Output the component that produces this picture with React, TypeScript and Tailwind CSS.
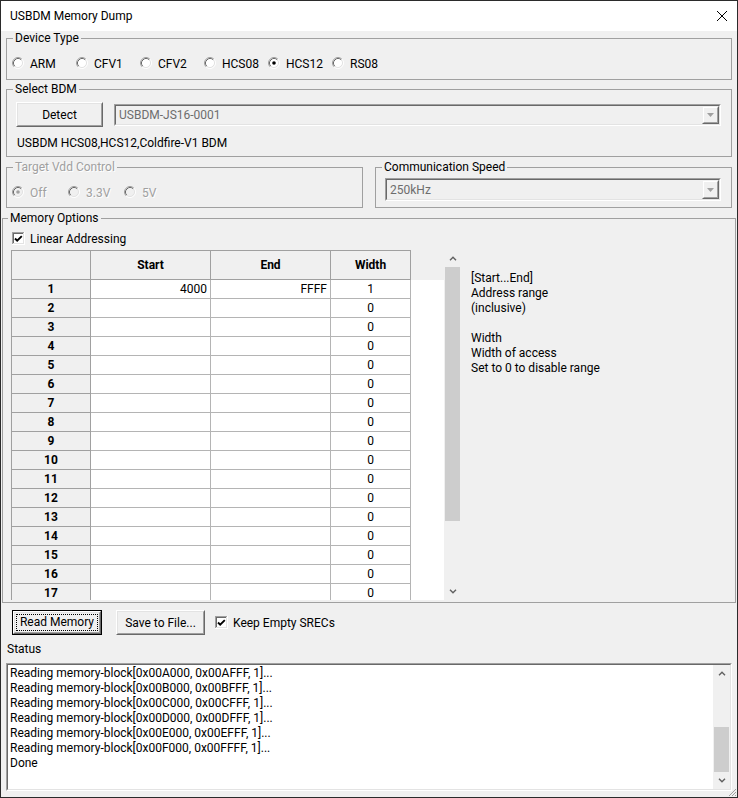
import React from "react";

function Radio({ checked = false, disabled = false }: { checked?: boolean; disabled?: boolean }) {
  return (
    <svg width="12" height="12" viewBox="0 0 12 12" className="shrink-0">
      <circle cx="6" cy="6" r="4.5" fill={disabled ? "#f0f0f0" : "#ffffff"} />
      <path d="M2.11 9.89A5.5 5.5 0 0 1 9.89 2.11" stroke="#a0a0a0" fill="none" />
      <path d="M2.82 9.18A4.5 4.5 0 0 1 9.18 2.82" stroke="#696969" fill="none" />
      <path d="M9.89 2.11A5.5 5.5 0 0 1 2.11 9.89" stroke="#ffffff" fill="none" />
      <path d="M9.18 2.82A4.5 4.5 0 0 1 2.82 9.18" stroke="#e3e3e3" fill="none" />
      {checked && <circle cx="6" cy="6" r="1.8" fill={disabled ? "#a0a0a0" : "#000000"} />}
    </svg>
  );
}

function CheckBox() {
  return (
    <svg width="13" height="13" viewBox="0 0 13 13" className="shrink-0" shapeRendering="crispEdges">
      <rect x="0" y="0" width="13" height="13" fill="#ffffff" />
      <path d="M0.5 12V0.5H12" stroke="#a0a0a0" fill="none" />
      <path d="M1.5 11V1.5H11" stroke="#696969" fill="none" />
      <path d="M0 12.5H12.5V0" stroke="#ffffff" fill="none" />
      <path d="M1 11.5H11.5V1" stroke="#e3e3e3" fill="none" />
      <path d="M3 6.5L5.2 8.7L9.8 4.1" stroke="#000000" strokeWidth="1.9" fill="none" shapeRendering="geometricPrecision" />
    </svg>
  );
}

function Chevron({ up = false }: { up?: boolean }) {
  return (
    <svg width="8" height="5" viewBox="0 0 8 5">
      <path d={up ? "M1 4.2L4 1.2L7 4.2" : "M1 0.8L4 3.8L7 0.8"} stroke="#606060" strokeWidth="1.4" fill="none" />
    </svg>
  );
}

function Combo({ text, className }: { text: string; className: string }) {
  return (
    <div className={"flex bg-[#f0f0f0] border border-t-[#a0a0a0] border-l-[#a0a0a0] border-b-white border-r-white " + className}>
      <div className="flex flex-1 border border-t-[#696969] border-l-[#696969] border-b-[#e3e3e3] border-r-[#e3e3e3]">
        <span className="flex-1 flex items-center pl-[3px] text-[#6d6d6d]">{text}</span>
        <div className="w-[17px] flex border border-t-[#f0f0f0] border-l-[#f0f0f0] border-b-[#696969] border-r-[#696969]">
          <div className="flex-1 flex items-center justify-center border border-t-white border-l-white border-b-[#a0a0a0] border-r-[#a0a0a0]">
            <svg width="7" height="4" viewBox="0 0 7 4">
              <path d="M0 0H7L3.5 4Z" fill="#a0a0a0" />
            </svg>
          </div>
        </div>
      </div>
    </div>
  );
}

function Btn({ children, className }: { children: React.ReactNode; className: string }) {
  return (
    <div className={"flex bg-[#f0f0f0] border border-t-white border-l-white border-b-[#696969] border-r-[#696969] " + className}>
      <div className="flex-1 flex items-center justify-center whitespace-nowrap border border-t-[#e3e3e3] border-l-[#e3e3e3] border-b-[#a0a0a0] border-r-[#a0a0a0]">
        {children}
      </div>
    </div>
  );
}

const rows = Array.from({ length: 17 }, (_, i) => i + 1);

const statusLines = [
  "Reading memory-block[0x00A000, 0x00AFFF, 1]...",
  "Reading memory-block[0x00B000, 0x00BFFF, 1]...",
  "Reading memory-block[0x00C000, 0x00CFFF, 1]...",
  "Reading memory-block[0x00D000, 0x00DFFF, 1]...",
  "Reading memory-block[0x00E000, 0x00EFFF, 1]...",
  "Reading memory-block[0x00F000, 0x00FFFF, 1]...",
  "Done",
];

export default function App() {
  return (
    <div className="w-[738px] h-[798px] relative overflow-hidden border border-[#2b2b2b] bg-[#f0f0f0] flex flex-col text-[12px] leading-[16px] text-black [font-family:Roboto,'Liberation_Sans',sans-serif]">
      {/* Title bar */}
      <div className="h-[30px] shrink-0 bg-white flex items-center pl-[9px] pr-[9px]">
        <span>USBDM Memory Dump</span>
        <svg className="ml-auto" width="12" height="12" viewBox="0 0 12 12">
          <path d="M1 1L11 11M11 1L1 11" stroke="#000000" strokeWidth="1" />
        </svg>
      </div>

      <div className="flex-1 flex flex-col px-[5px]">
        {/* Device Type */}
        <fieldset className="border border-[#a0a0a0]">
          <legend className="ml-[6px] px-[2px] leading-[15px]">Device Type</legend>
          <div className="pt-[9px] pb-[8px]">
            <div className="flex h-[16px] items-center pl-[5px]">
              {["ARM", "CFV1", "CFV2", "HCS08", "HCS12", "RS08"].map((n) => (
                <div key={n} className="w-[64px] flex items-center gap-[6px]">
                  <Radio checked={n === "HCS12"} />
                  <span className="pt-[1px]">{n}</span>
                </div>
              ))}
            </div>
          </div>
        </fieldset>

        {/* Select BDM */}
        <fieldset className="mt-[2px] border border-[#a0a0a0]">
          <legend className="ml-[6px] px-[2px] leading-[15px]">Select BDM</legend>
          <div className="pt-[5px] pb-[6px]">
            <div className="flex h-[25px] items-center pl-[9px] pr-[10px]">
              <Btn className="w-[87px] h-[25px]">Detect</Btn>
              <Combo text="USBDM-JS16-0001" className="ml-[11px] flex-1 h-[22px]" />
            </div>
            <div className="mt-[8px] mb-[-1px] pl-[10px] leading-[16px]">USBDM HCS08,HCS12,Coldfire-V1 BDM</div>
          </div>
        </fieldset>

        {/* Target Vdd + Communication speed */}
        <div className="mt-[3px] flex gap-[12px]">
          <fieldset className="flex-1 border border-[#a0a0a0]">
            <legend className="ml-[6px] px-[2px] leading-[15px] text-[#a0a0a0] [text-shadow:1px_1px_0_#ffffff]">Target Vdd Control</legend>
            <div className="pt-[9px] pb-[7px]">
              <div className="flex h-[16px] items-center pl-[5px] text-[#a0a0a0] [text-shadow:1px_1px_0_#ffffff]">
                {["Off", "3.3V", "5V"].map((n) => (
                  <div key={n} className="w-[56px] flex items-center gap-[6px]">
                    <Radio checked={n === "Off"} disabled />
                    <span className="pt-[1px]">{n}</span>
                  </div>
                ))}
              </div>
            </div>
          </fieldset>
          <fieldset className="flex-1 border border-[#a0a0a0]">
            <legend className="ml-[6px] px-[2px] leading-[15px]">Communication Speed</legend>
            <div className="pt-[3px] pb-[6px] pl-[9px] pr-[10px]">
              <Combo text="250kHz" className="h-[23px]" />
            </div>
          </fieldset>
        </div>

        {/* Memory Options */}
        <fieldset className="mt-[3px] mx-[-4px] border border-[#a0a0a0]">
          <legend className="ml-[5px] px-[2px] leading-[15px]">Memory Options</legend>
          <div className="pt-[4px] pb-[2px] pl-[8px]">
            <div className="flex h-[16px] items-center pl-[1px] gap-[5px]">
              <CheckBox />
              <span className="pt-[1px]">Linear Addressing</span>
            </div>
            <div className="mt-[4px] flex">
              {/* Grid */}
              <div className="w-[450px] h-[350px] flex shrink-0">
                <div className="w-[433px] h-full overflow-hidden flex flex-col bg-white">
                  <div className="flex h-[30px] shrink-0 bg-[#f0f0f0] font-bold">
                    <div className="w-[80px] border border-[#a0a0a0]" />
                    <div className="w-[120px] border-t border-b border-r border-[#a0a0a0] flex items-center justify-center">Start</div>
                    <div className="w-[120px] border-t border-b border-r border-[#a0a0a0] flex items-center justify-center">End</div>
                    <div className="w-[80px] border-t border-b border-r border-[#a0a0a0] flex items-center justify-center">Width</div>
                  </div>
                  {rows.map((r) => (
                    <div key={r} className="flex h-[19px] shrink-0">
                      <div className="w-[80px] bg-[#f0f0f0] border-l border-r border-b border-[#a0a0a0] flex items-center justify-center font-bold">{r}</div>
                      <div className="w-[120px] border-r border-b border-[#b4b4b4] flex items-center justify-end pr-[3px]">{r === 1 ? "4000" : ""}</div>
                      <div className="w-[120px] border-r border-b border-[#b4b4b4] flex items-center justify-end pr-[3px]">{r === 1 ? "FFFF" : ""}</div>
                      <div className="w-[80px] border-r border-b border-[#b4b4b4] flex items-center justify-center">{r === 1 ? "1" : "0"}</div>
                    </div>
                  ))}
                </div>
                <div className="w-[17px] h-full bg-[#f0f0f0] flex flex-col">
                  <div className="h-[17px] flex items-center justify-center">
                    <Chevron up />
                  </div>
                  <div className="flex-1 px-[1px]">
                    <div className="h-[254px] bg-[#cdcdcd]" />
                  </div>
                  <div className="h-[17px] flex items-center justify-center">
                    <Chevron />
                  </div>
                </div>
              </div>
              {/* Help */}
              <div className="ml-[10px] mt-[21px] leading-[15px]">
                <div>[Start...End]</div>
                <div>Address range</div>
                <div>(inclusive)</div>
                <div className="h-[15px]" />
                <div>Width</div>
                <div>Width of access</div>
                <div>Set to 0 to disable range</div>
              </div>
            </div>
          </div>
        </fieldset>

        {/* Buttons */}
        <div className="mt-[7px] flex h-[25px] items-center pl-[6px]">
          <div className="w-[90px] h-[25px] flex border border-black">
            <Btn className="flex-1">
              <div className="flex-1 self-stretch m-[1px] flex items-center justify-center border border-dotted border-black leading-[13px]">
                Read Memory
              </div>
            </Btn>
          </div>
          <Btn className="ml-[14px] w-[89px] h-[25px]">Save to File...</Btn>
          <div className="ml-[10px] flex items-center gap-[5px]">
            <CheckBox />
            <span className="pt-[1px]">Keep Empty SRECs</span>
          </div>
        </div>

        {/* Status */}
        <div className="mt-[6px] mb-[-1px] pl-[1px] leading-[16px]">Status</div>
        <div className="mt-[7px] h-[128px] flex bg-white border border-t-[#a0a0a0] border-l-[#a0a0a0] border-b-white border-r-white">
          <div className="flex-1 flex border border-t-[#696969] border-l-[#696969] border-b-[#e3e3e3] border-r-[#e3e3e3]">
            <div className="flex-1 pl-[2px] pt-[1px] leading-[15px]">
              {statusLines.map((s) => (
                <div key={s}>{s}</div>
              ))}
            </div>
            <div className="w-[17px] h-full bg-[#f0f0f0] flex flex-col">
              <div className="h-[17px] flex items-center justify-center">
                <Chevron up />
              </div>
              <div className="flex-1 px-[1px] pt-[45px]">
                <div className="h-[45px] bg-[#cdcdcd]" />
              </div>
              <div className="h-[17px] flex items-center justify-center">
                <Chevron />
              </div>
            </div>
          </div>
        </div>
      </div>

      {/* resize grip */}
      <svg className="absolute right-0 bottom-0" width="11" height="11" viewBox="0 0 11 11">
        <path d="M10 3L3 10M10 6L6 10M10 9L9 10" stroke="#a0a0a0" strokeWidth="1" />
      </svg>
    </div>
  );
}
